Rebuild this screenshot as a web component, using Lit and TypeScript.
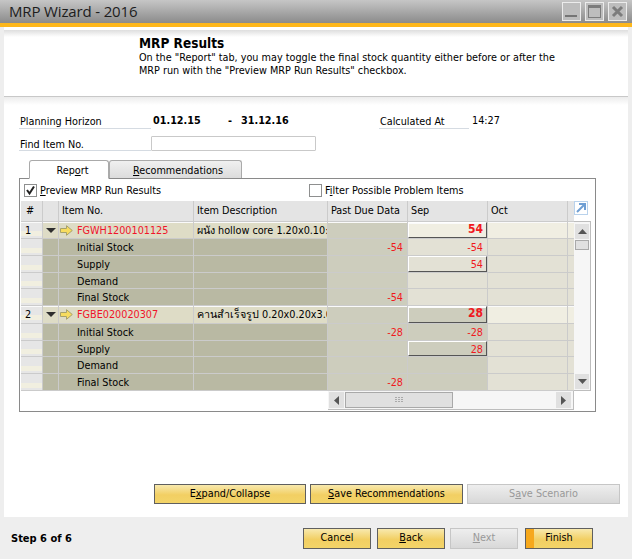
import { LitElement, html, css } from "lit";
import { customElement } from "lit/decorators.js";

const arrow = html`<svg width="13" height="11" viewBox="0 0 13 11"><path d="M.5 3.500H6.500V.7L12.300 5.500 6.500 10.300V7.500H.5Z" fill="#f7dc5e" stroke="#a8a26a" stroke-width="1"/></svg>`;
const tri = html`<svg width="10" height="5" viewBox="0 0 10 5"><path d="M0 0H10L5 5Z" fill="#2e2e2e"/></svg>`;

type Row = { kind: "m" | "s"; num?: string; code?: string; desc?: string; label?: string; past?: string; sep?: string; btn?: boolean; dark?: boolean };
const rows: Row[] = [
  { kind: "m", num: "1", code: "FGWH1200101125", desc: "ผนัง hollow core 1.20x0.10:", sep: "54", btn: true },
  { kind: "s", label: "Initial Stock", past: "-54", sep: "-54" },
  { kind: "s", label: "Supply", sep: "54", btn: true },
  { kind: "s", label: "Demand" },
  { kind: "s", label: "Final Stock", past: "-54" },
  { kind: "m", num: "2", code: "FGBE020020307", desc: "คานสำเร็จรูป 0.20x0.20x3.0", sep: "28", btn: true, dark: true },
  { kind: "s", label: "Initial Stock", past: "-28", sep: "-28", dark: true },
  { kind: "s", label: "Supply", sep: "28", btn: true, dark: true },
  { kind: "s", label: "Demand", dark: true },
  { kind: "s", label: "Final Stock", past: "-28", dark: true },
];

@customElement("app-root")
export class AppRoot extends LitElement {
  static styles = css`
    :host { display: block; width: 632px; height: 559px; overflow: hidden; background: #eeeeee; color: #000;
      font: 10.75px/13px "DejaVu Sans", sans-serif; font-stretch: condensed; }
    * { box-sizing: border-box; }
    u { text-underline-offset: 1px; }
    .page { display: flex; flex-direction: column; height: 559px; }
    .title { height: 23px; flex: none; display: flex; align-items: center; padding: 0 5px 0 9px; gap: 4px;
      background: linear-gradient(#c6c6c6, #8b8b8b); }
    .title h1 { margin: 0 auto 0 0; font: 400 15px/23px "Open Sans", sans-serif; letter-spacing: -0.15px; color: #1d1d1d; }
    .win { width: 19px; height: 19px; margin-top: 0; border: 1px solid #ececec; background: #bdbdbd;
      display: flex; align-items: center; justify-content: center; }
    .accent { height: 4px; flex: none; background: #fdb71c; }
    .main { height: 490px; flex: none; margin: 0 4px; background: #fff; display: flex; flex-direction: column; }
    .head { height: 70px; flex: none; padding: 9px 0 0 135px; border-bottom: 1px solid #c8c8c8;
      background: linear-gradient(#fff 3px, #dedede 3px, #fff 10px); }
    .head h2 { margin: 0; font-weight: 700; font-size: 13.5px; line-height: 15px; }
    .head p { margin: 0; line-height: 13px; }
    .shade { height: 8px; flex: none; background: linear-gradient(#ececec, #fff); }
    .form { padding: 8px 0 0 15px; }
    .frow { display: flex; align-items: flex-end; height: 16px; }
    .frow + .frow { margin-top: 7px; height: 15px; }
    .lab { height: 16px; padding: 2px 0 0 1px; border-bottom: 1px solid #d5dbe2; }
    .lab.l1 { width: 132px; }
    .frow + .frow .lab { height: 15px; }
    .d { font-weight: 700; }
    .d1 { margin-left: 2px; width: 75px; height: 15px; }
    .dash { width: 13px; height: 15px; }
    .d2 { width: 138px; height: 15px; }
    .lab.l2 { width: 90px; }
    .time { margin-left: 3px; height: 15px; }
    .input { width: 165px; height: 15px; border: 1px solid #c9c9c9; border-radius: 1px; background: #fff; }
    .tabs { display: flex; align-items: flex-end; height: 19px; margin: 8px 0 0 25px; position: relative; z-index: 1; }
    .tab { height: 18px; width: 133px; text-align: center; padding: 3px 0 0 5px; border: 1px solid #aaa; border-bottom: 0; border-radius: 3px 3px 0 0;
      background: linear-gradient(#f0f0f0, #dcdcdc); }
    .tab.on { height: 19px; width: 80px; background: #fff; padding: 3px 0 0 7px; border-bottom: 1px solid #fff; margin-bottom: -1px; }
    .frame { margin: 0 0 0 15px; width: 577px; height: 234px; border: 1px solid #8a8a8a; background: #fff; padding: 0 0 0 1px; }
    .checks { height: 22px; display: flex; align-items: center; padding: 1px 0 0 3px; }
    .cb { width: 13px; height: 13px; border: 1px solid #8e8f8f; background: #fff; margin-right: 3px; flex: none; display: flex; }
    .chk1 { width: 269px; flex: none; }
    .gridwrap { display: grid; grid-template-columns: 553px 17px; }
    .table { display: grid; background: #cbcbcb; column-gap: 1px; row-gap: 1px; padding-bottom: 1px;
      grid-template-columns: 21px 15px 134px 133px 79px 79px 79px 5px;
      grid-template-rows: 20px 16px 16px 16px 15px 16px 17px 16px 15px 16px 16px; }
    .cell { padding: 2px 3px 0; white-space: nowrap; overflow: hidden; line-height: 14px; min-width: 0; }
    .hd { background: #e4e4e4; padding-top: 3px; padding-left: 3px; }
    .rn { background: linear-gradient(#e6e6e6 0 55%, #f1efe0 55% 85%, #e6e6e6 85%); padding-left: 4px; }
    .hd.first { padding-left: 5px; }
    .exp { display: flex; align-items: center; justify-content: center; padding: 0; }
    .ml { background: #dedcc6; }
    .sl { background: #b9b9a3; }
    .code { color: #f0142a; padding-left: 0; }
    .mcode { background: #dedcc6; display: flex; align-items: center; gap: 4px; padding: 1px 0 0 1px; overflow: hidden; }
    .mcode svg { margin-top: -1px; }
    .slab { padding-left: 18px; }
    .num { text-align: right; color: #f0191e; padding-right: 4px; }
    .past { background: #cdcdbd; }
    .light { background: #e3e1d5; }
    .lighter { background: #f0eee2; }
    .dark { background: #cdcdbd; }
    .btn { padding: 1px 3px 0 0; border-style: solid; border-width: 1px; border-color: #fff #555 #555 #fff; line-height: 13px; }
    .bold { font-weight: 700; font-size: 12px; padding-top: 0; }
    .master { box-shadow: inset 0 1px #fafafa; }
    .side { display: flex; flex-direction: column; }
    .expand { height: 20px; }
    .v { flex: 1; border: 1px solid #bdbdbd; border-left: 0; background: #f6f6f6; padding: 2px 1px 1px 1px; display: flex; flex-direction: column; }
    .sb { flex: none; width: 14px; height: 15px; background: #e0e0e0; display: flex; align-items: center; justify-content: center; }
    .thumb { flex: none; width: 14px; height: 10px; margin-top: 1px; background: #e0e0e0; border: 1px solid #a9a9a9; }
    .grow { flex: 1; }
    .h { grid-column: 1; margin-left: 307px; height: 19px; border: 1px solid #bdbdbd; border-top: 0; border-left: 0; background: #f6f6f6; display: flex; align-items: stretch; padding: 1px 2px 1px 1px; }
    .h .sb { height: 16px; width: 15px; }
    .hthumb { width: 108px; margin-left: 1px; background: #e0e0e0; border: 1px solid #a9a9a9; display: flex; align-items: center; justify-content: center; }
    .actions { display: flex; gap: 4px; margin: 72px 0 0 150px; }
    .b { height: 20px; border: 1px solid #5f5f5f; background: linear-gradient(#f8e9ae, #f2cf63 55%, #f3d468); text-align: center; line-height: 17px; }
    .off { border-color: #c6c6c6; background: linear-gradient(#eeeeee, #d8d8d8); color: #999; }
    .a1 { width: 152px; } .a2 { width: 153px; } .a3 { width: 153px; }
    .foot { flex: 1; display: flex; align-items: center; padding: 0 0 0 11px; }
    .step { font-weight: 700; font-size: 11px; margin-right: auto; }
    .fb { display: flex; margin: 1px 39px 0 0; height: 21px; }
    .fb .b { height: 21px; width: 68px; line-height: 18px; }
    .m1 { margin-left: 6px; } .m2 { margin-left: 5px; } .m3 { margin-left: 7px; }
    .finish { background: linear-gradient(90deg, #f6a81c 0 8px, transparent 8px), linear-gradient(#f8e9ae, #f2cf63 55%, #f3d468) !important; }
  `;

  private cellsFor(r: Row) {
    const sepCls = r.dark ? "dark" : r.kind === "m" ? "lighter" : "light";
    const octCls = r.kind === "m" ? "lighter" : "light";
    const m = r.kind === "m" ? "master" : "";
    return html`
      <div class="cell rn ${m}">${r.num ?? ""}</div>
      ${r.kind === "m"
        ? html`<div class="cell exp ml ${m}">${tri}</div>
            <div class="cell mcode ${m}">${arrow}<span class="code">${r.code}</span></div>
            <div class="cell ml ${m}">${r.desc}</div>`
        : html`<div class="cell sl"></div><div class="cell sl slab">${r.label}</div><div class="cell sl"></div>`}
      <div class="cell past num ${m}">${r.past ?? ""}</div>
      <div class="cell num ${sepCls} ${m} ${r.btn ? "btn" : ""} ${r.kind === "m" ? "bold" : ""}">${r.sep ?? ""}</div>
      <div class="cell ${octCls} ${m}"></div>
      <div class="cell ${octCls} ${m}"></div>`;
  }

  render() {
    return html`<div class="page">
      <div class="title">
        <h1>MRP Wizard - 2016</h1>
        <div class="win"><svg width="13" height="13"><rect x="0" y="10" width="12" height="2" fill="#757575"/></svg></div>
        <div class="win"><svg width="13" height="13"><rect x=".5" y=".5" width="12" height="12" fill="none" stroke="#7c7c7c"/><rect x="1" y="1" width="11" height="2" fill="#7c7c7c"/></svg></div>
        <div class="win"><svg width="13" height="13"><path d="M2 2 11 11M11 2 2 11" stroke="#7c7c7c" stroke-width="3"/></svg></div>
      </div>
      <div class="accent"></div>
      <div class="main">
        <div class="head">
          <h2>MRP Results</h2>
          <p>On the "Report" tab, you may toggle the final stock quantity either before or after the<br />MRP run with the "Preview MRP Run Results" checkbox.</p>
        </div>
        <div class="shade"></div>
        <div class="form">
          <div class="frow">
            <div class="lab l1">Planning Horizon</div>
            <div class="d d1">01.12.15</div><div class="d dash">-</div><div class="d d2">31.12.16</div>
            <div class="lab l2">Calculated At</div><div class="time">14:27</div>
          </div>
          <div class="frow"><div class="lab l1">Find Item No.</div><div class="input"></div></div>
        </div>
        <div class="tabs">
          <div class="tab on">Rep<u>o</u>rt</div>
          <div class="tab"><u>R</u>ecommendations</div>
        </div>
        <div class="frame">
          <div class="checks">
            <div class="cb"><svg width="11" height="11" viewBox="0 0 11 11"><path d="M2 5 4.500 8.500 9 1.500" fill="none" stroke="#222" stroke-width="2"/></svg></div>
            <span class="chk1"><u>P</u>review MRP Run Results</span>
            <div class="cb"></div>
            <span>F<u>i</u>lter Possible Problem Items</span>
          </div>
          <div class="gridwrap">
            <div class="table">
              <div class="cell hd first">#</div><div class="cell hd"></div><div class="cell hd">Item No.</div>
              <div class="cell hd">Item Description</div><div class="cell hd">Past Due Data</div>
              <div class="cell hd">Sep</div><div class="cell hd">Oct</div><div class="cell hd"></div>
              ${rows.map((r) => this.cellsFor(r))}
            </div>
            <div class="side">
              <div class="expand"><svg width="14" height="14" viewBox="0 0 14 14"><rect x=".5" y=".5" width="13" height="13" fill="#fff" stroke="#b9d2ec"/><path d="M3 11 10 4M5 3H11V9" fill="none" stroke="#6f9fd4" stroke-width="2"/></svg></div>
              <div class="v">
                <div class="sb"><svg width="9" height="5"><path d="M0 5H9L4.500 0Z" fill="#555"/></svg></div>
                <div class="thumb"></div>
                <div class="grow"></div>
                <div class="sb"><svg width="9" height="5"><path d="M0 0H9L4.500 5Z" fill="#555"/></svg></div>
              </div>
            </div>
            <div class="h">
              <div class="sb"><svg width="5" height="9"><path d="M5 0V9L0 4.500Z" fill="#555"/></svg></div>
              <div class="hthumb"><svg width="9" height="6"><path d="M0 0h2v1H0zM3 0h2v1H3zM6 0h2v1H6zM0 2h2v1H0zM3 2h2v1H3zM6 2h2v1H6zM0 4h2v1H0zM3 4h2v1H3zM6 4h2v1H6z" fill="#aaa"/></svg></div>
              <div class="grow"></div>
              <div class="sb"><svg width="5" height="9"><path d="M0 0V9L5 4.500Z" fill="#555"/></svg></div>
            </div>
          </div>
        </div>
        <div class="actions">
          <div class="b a1">E<u>x</u>pand/Collapse</div>
          <div class="b a2"><u>S</u>ave Recommendations</div>
          <div class="b a3 off">S<u>a</u>ve Scenario</div>
        </div>
      </div>
      <div class="foot">
        <div class="step">Step 6 of 6</div>
        <div class="fb">
          <div class="b">Cancel</div>
          <div class="b m1"><u>B</u>ack</div>
          <div class="b off m2"><u>N</u>ext</div>
          <div class="b m3 finish">Finish</div>
        </div>
      </div>
    </div>`;
  }
}
